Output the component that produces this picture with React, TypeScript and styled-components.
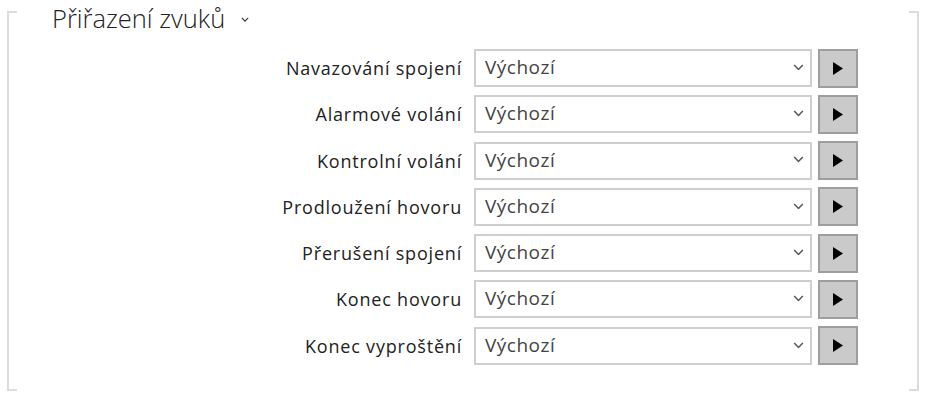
import styled, { createGlobalStyle } from 'styled-components'

const GlobalStyle = createGlobalStyle`
    body {
        margin: 0;
        background: #fff;
        font-family: 'Open Sans', 'Noto Sans', sans-serif;
        color: #222;
    }
`

const sounds = [
    'Navazování spojení',
    'Alarmové volání',
    'Kontrolní volání',
    'Prodloužení hovoru',
    'Přerušení spojení',
    'Konec hovoru',
    'Konec vyproštění',
]

function Chevron({ size, color }: { size: number; color: string }) {
    return (
        <svg width={size} height={size / 2 + 1} viewBox='0 0 10 6' fill='none'>
            <path d='M1 1l4 4 4-4' stroke={color} strokeWidth='1.4' />
        </svg>
    )
}

function App() {
    return (
        <Page>
            <GlobalStyle />
            <Frame>
                <Title>
                    Přiřazení zvuků
                    <Chevron size={8} color='#333' />
                </Title>
                <Rows>
                    {sounds.map((name) => (
                        <Row key={name}>
                            <Label>{name}</Label>
                            <SelectBox>
                                <span>Výchozí</span>
                                <Chevron size={11} color='#555' />
                            </SelectBox>
                            <PlayButton>
                                <svg width='10' height='13' viewBox='0 0 10 13'>
                                    <path d='M0 0L10 6.5L0 13Z' fill='#000' />
                                </svg>
                            </PlayButton>
                        </Row>
                    ))}
                </Rows>
            </Frame>
        </Page>
    )
}

export default App

const Page = styled.div`
    padding: 11px 0 0 7px;
`

const stub = 'linear-gradient(#dcdcdc, #dcdcdc)'

const Frame = styled.div`
    box-sizing: border-box;
    display: flex;
    flex-direction: column;
    width: 912px;
    height: 380px;
    border-left: 2px solid #dcdcdc;
    border-right: 2px solid #dcdcdc;
    background:
        ${stub} top left / 8px 2px no-repeat,
        ${stub} top right / 8px 2px no-repeat,
        ${stub} bottom left / 8px 2px no-repeat,
        ${stub} bottom right / 8px 2px no-repeat;
`

const Title = styled.h2`
    margin: -10px 0 0 43px;
    display: flex;
    align-items: center;
    gap: 16px;
    font-size: 25.5px;
    font-weight: 300;
    line-height: 34px;
    color: #222;
    svg {
        margin-top: 2px;
    }
`

const Rows = styled.div`
    display: flex;
    flex-direction: column;
    gap: 8.3px;
    margin-top: 14px;
    padding-right: 59px;
`

const Row = styled.div`
    display: flex;
    align-items: center;
    height: 38px;
`

const Label = styled.label`
    flex: 1;
    text-align: right;
    margin-right: 12px;
    font-size: 18px;
    letter-spacing: 0.8px;
    color: #222;
`

const SelectBox = styled.div`
    box-sizing: border-box;
    width: 338px;
    height: 38px;
    display: flex;
    align-items: center;
    justify-content: space-between;
    padding: 0 6px 2px 9px;
    border: 2px solid #cfcfcf;
    background: #fff;
    font-size: 19px;
    letter-spacing: 0.5px;
    color: #444;
`

const PlayButton = styled.button`
    box-sizing: border-box;
    width: 40px;
    height: 39px;
    margin-left: 6px;
    padding: 0;
    display: flex;
    align-items: center;
    justify-content: center;
    background: #cacaca;
    border: 2px solid #9e9e9e;
`
